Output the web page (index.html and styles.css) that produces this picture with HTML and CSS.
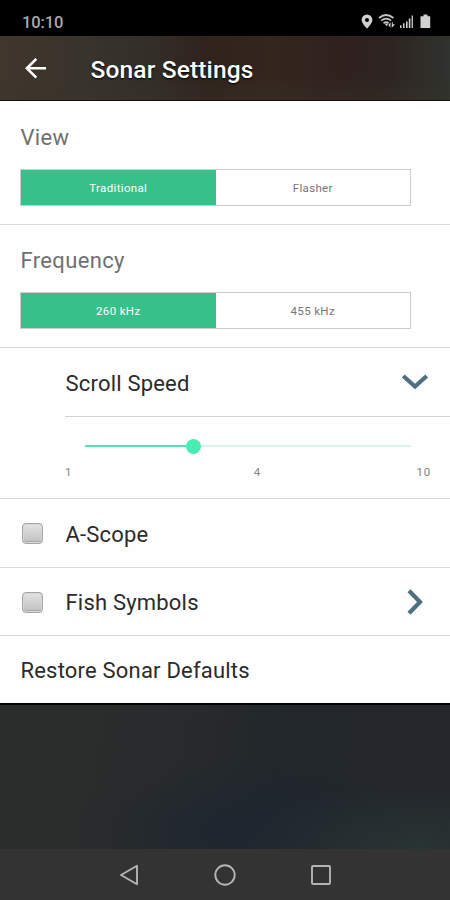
FILE: index.html
```html
<!DOCTYPE html>
<html lang="en">
<head>
<meta charset="utf-8">
<title>Sonar Settings</title>
<link rel="stylesheet" href="styles.css">
</head>
<body>
<div class="screen">
  <div class="status">
    <span class="clock">10:10</span>
    <svg class="status-icons" width="72" height="18" viewBox="0 0 72 18" fill="#d0d0d0">
      <path fill-rule="evenodd" d="M7 2.500a5.400 5.400 0 0 0-5.400 5.400C1.600 11.400 7 16.500 7 16.500s5.400-5.100 5.400-8.600A5.400 5.400 0 0 0 7 2.500zM7 5.900a2 2 0 1 1 0 4a2 2 0 0 1 0-4z"/>
      <g fill="none" stroke="#c4c4c4" stroke-width="1.700">
        <path d="M19 6q7.200-6 14.400 0M21.300 8.700q4.900-4 9.800 0M23.500 11.200q2.700-2.200 5.200 0"/>
      </g>
      <path d="M24.300 11.600h3.800l-1.200 2.700zM28.300 13l2.200-2.800v5.500zM31.800 10.200h1v2h2.200l-3.200 3.500z"/>
      <path d="M40 13.200h1.500V16H40zM43 11.200h1.500V16H43zM46 9.500h1.600V16H46zM48.800 6.500h1.600V16h-1.600zM51.600 3.500h1.300V16h-1.300z"/>
      <path d="M63.500 2.500h4v1.700h2.700V16h-9.700V4.200h3z"/>
    </svg>
  </div>
  <header class="appbar">
    <svg class="back" width="22" height="22" viewBox="0 0 22 22" fill="none" stroke="#fff" stroke-width="2.600"><path d="M21 11.300H2M11.300 1.900L1.900 11.300l9.400 9.400"/></svg>
    <h1>Sonar Settings</h1>
  </header>
  <main>
    <section class="group">
      <h2>View</h2>
      <div class="segments"><span class="on">Traditional</span><span>Flasher</span></div>
    </section>
    <section class="group">
      <h2>Frequency</h2>
      <div class="segments"><span class="on">260 kHz</span><span>455 kHz</span></div>
    </section>
    <section class="speed">
      <div class="speed-head">
        <span class="label">Scroll Speed</span>
        <svg width="28" height="18" viewBox="0 0 28 18" fill="none" stroke="#4d6f80" stroke-width="4.200"><path d="M2.300 3L14 13.500 25.700 3"/></svg>
      </div>
      <div class="slider"><div class="filled"></div><div class="thumb"></div><div class="rest"></div></div>
      <div class="scale"><span>1</span><span>4</span><span>10</span></div>
    </section>
    <div class="row"><i class="box"></i><span class="label">A-Scope</span></div>
    <div class="row"><i class="box"></i><span class="label">Fish Symbols</span>
      <svg class="next" width="18" height="28" viewBox="0 0 18 28" fill="none" stroke="#4d6f80" stroke-width="4.200"><path d="M3 2.700L14 14 3 25.300"/></svg>
    </div>
    <div class="row last"><span class="label">Restore Sonar Defaults</span></div>
  </main>
  <div class="backdrop"></div>
  <nav>
    <svg width="20" height="22" viewBox="0 0 20 22" fill="none" stroke="#b4b4b4" stroke-width="1.900" stroke-linejoin="round"><path d="M18 1.800v18.400L2 11z"/></svg>
    <svg width="22" height="22" viewBox="0 0 22 22" fill="none" stroke="#b4b4b4" stroke-width="1.900"><circle cx="11" cy="11" r="9.700"/></svg>
    <svg width="20" height="20" viewBox="0 0 20 20" fill="none" stroke="#b4b4b4" stroke-width="1.900"><rect x="1" y="1" width="18" height="18" rx="1"/></svg>
  </nav>
</div>
</body>
</html>
```
FILE: styles.css
```css
* { box-sizing: border-box; margin: 0; padding: 0; }
body { font-family: Roboto, "Liberation Sans", sans-serif; background: #000; }
.screen { width: 450px; height: 900px; display: flex; flex-direction: column; overflow: hidden; }
svg { display: block; flex: none; }
.status { height: 36px; background: #000; display: flex; justify-content: space-between; padding: 13px 18px 0 22px; }
.clock { font-size: 16.500px; line-height: 19px; font-weight: 500; color: #aaa; letter-spacing: -.1px; }
.status-icons { margin-top: -1px; }
.appbar {
  height: 65px; display: flex; align-items: center; padding-left: 25px; border-bottom: 1px solid #15110e;
  background: linear-gradient(180deg, transparent 60%, rgba(55, 52, 42, .35)), linear-gradient(90deg, #41362c 0, #37332c 22%, #332f28 33%, #30231d 45%, #34261d 60%, #30211f 76%, #2d2421 86%, #2f322d 100%);
}
.appbar h1 { margin-left: 43.500px; padding-top: 3px; font-size: 24.500px; line-height: 30px; font-weight: 500; letter-spacing: .15px; color: #fff; text-shadow: 0 1px 2px #000; }
main { background: #fefefe; border-bottom: 2px solid #020303; height: 604px; flex: none; }
.group { height: 123px; padding: 23px 0 0 20px; border-bottom: 1px solid #d8d8d8; }
.group:first-child { height: 124px; padding-top: 24px; }
h2 { font-size: 22px; line-height: 26px; font-weight: 400; letter-spacing: .35px; color: #707070; padding-left: .5px; }
.segments { display: flex; width: 391px; height: 37px; margin-top: 18px; border: 1px solid #ccc; }
.segments span { flex: 1; display: flex; align-items: center; justify-content: center; font-size: 11.500px; letter-spacing: .35px; color: #777; }
.segments .on { background: #38c08b; color: #fff; }
.label { font-size: 22px; line-height: 26px; letter-spacing: .2px; color: #2b2b2b; padding-left: .5px; }
.speed { height: 151px; border-bottom: 1px solid #d8d8d8; padding-left: 65px; }
.speed-head { height: 69px; display: flex; align-items: center; justify-content: space-between; border-bottom: 1px solid #d3d3d3; padding-right: 21px; }
.speed-head .label { padding-top: 3px; }
.slider { display: flex; align-items: center; height: 16px; width: 326px; margin: 21px 0 0 20px; }
.filled { width: 101px; height: 2px; background: #52e3b0; }
.thumb { width: 15px; height: 15px; border-radius: 50%; background: #47edb3; }
.rest { flex: 1; height: 2px; background: #d5f5ea; }
.scale { display: grid; grid-template-columns: 1fr auto 1fr; margin-top: 11px; font-size: 11.500px; line-height: 14px; letter-spacing: .8px; color: #858585; }
.scale span:last-child { text-align: right; padding-right: 19px; }
.row { height: 69px; display: flex; align-items: center; padding: 2px 26px 0 22px; border-bottom: 1px solid #d8d8d8; }
.row .label { padding-top: 2px; }
.row + .row { height: 68px; }
.row + .row .label { padding-top: 1px; }
.box { width: 21px; height: 21px; margin-right: 22px; border-radius: 4px; border: 1px solid #a5a5a5; background: linear-gradient(#e3e3e3, #bfbfbf); box-shadow: inset 0 0 0 1px #d8d8d8, inset 0 -2px 1px #aaa; }
.row:not(.row + .row) .box { margin-top: -1px; }
.next { margin: -2px 0 0 auto; }
.row.last { height: 67px; border: 0; padding-left: 20px; }
.backdrop {
  flex: 1;
  background: radial-gradient(ellipse 180px 60px at 420px 140px, #283333, transparent), radial-gradient(ellipse 170px 70px at 245px 125px, #1e2630, transparent), linear-gradient(100deg, #2b2d2d, #292c2c 35%, #22272b 60%, #24272b);
}
nav { height: 51px; background: #333; display: flex; align-items: center; justify-content: space-between; padding: 0 119px; }
```
